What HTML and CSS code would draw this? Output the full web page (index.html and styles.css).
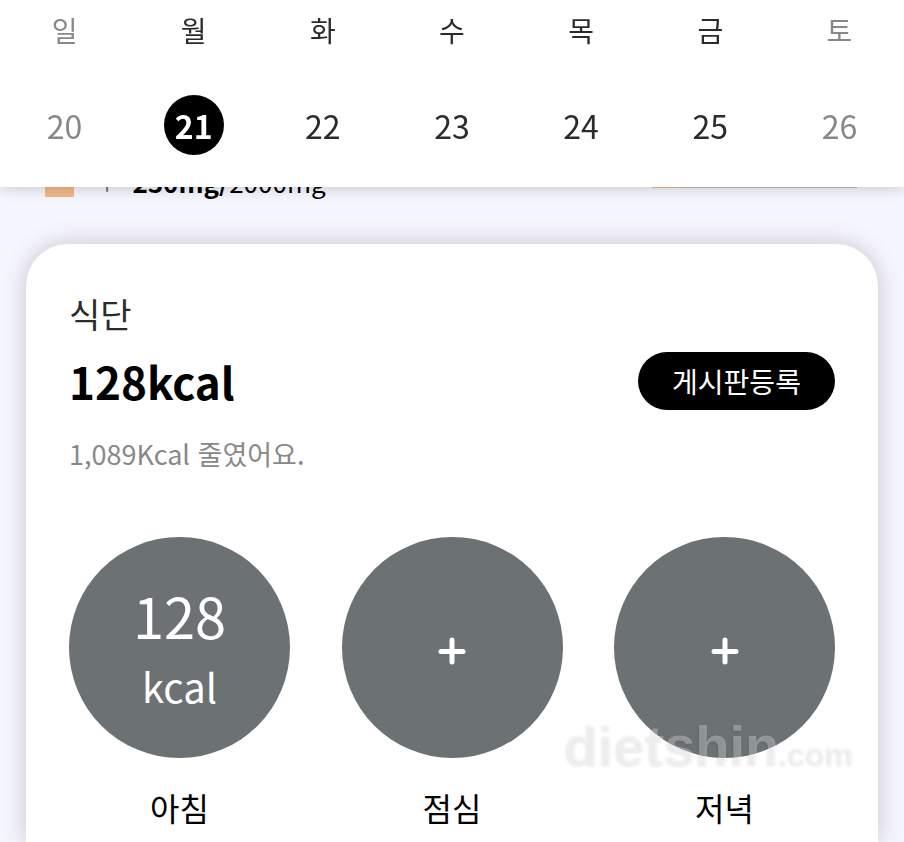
FILE: index.html
```
<!DOCTYPE html>
<html lang="ko">
<head>
  <meta charset="UTF-8">
  <meta name="viewport" content="width=device-width, initial-scale=1.0">
  <title>식단</title>
  <link rel="stylesheet" href="styles.css">
</head>
<body>
  <header class="week">
    <ul class="week_list">
      <li class="day off"><span class="name">일</span><button class="date">20</button></li>
      <li class="day on"><span class="name">월</span><button class="date">21</button></li>
      <li class="day"><span class="name">화</span><button class="date">22</button></li>
      <li class="day"><span class="name">수</span><button class="date">23</button></li>
      <li class="day"><span class="name">목</span><button class="date">24</button></li>
      <li class="day"><span class="name">금</span><button class="date">25</button></li>
      <li class="day off"><span class="name">토</span><button class="date">26</button></li>
    </ul>
  </header>

  <main class="content">
    <div class="nutrient">
      <span class="color"></span>
      <span class="label">나</span>
      <p class="amount"><b>230mg/</b>2000mg</p>
      <div class="bar"><div class="bar_fill"></div></div>
    </div>

    <section class="card">
      <h2 class="title">식단</h2>
      <div class="total">
        <strong class="kcal">128kcal</strong>
        <button class="post_btn">게시판등록</button>
      </div>
      <p class="desc">1,089Kcal 줄였어요.</p>

      <ul class="meals">
        <li class="meal">
          <button class="circle" aria-label="아침 128 kcal"><span class="num">128</span><span class="unit">kcal</span></button>
          <span class="meal_name">아침</span>
        </li>
        <li class="meal">
          <button class="circle" aria-label="점심 추가"><svg class="plus" viewBox="0 0 28 28"><path d="M3 14.5H25M14 3V25"/></svg></button>
          <span class="meal_name">점심</span>
        </li>
        <li class="meal">
          <button class="circle" aria-label="저녁 추가"><svg class="plus" viewBox="0 0 28 28"><path d="M3 14.5H25M14 3V25"/></svg></button>
          <span class="meal_name">저녁</span>
        </li>
      </ul>
      <p class="mark">dietshin<span class="mark_com">.com</span></p>
    </section>
  </main>
</body>
</html>
```
FILE: styles.css
```
*{margin: 0; padding: 0; box-sizing: border-box;}
body{
  background: #f6f6ff;
  color: #000;
  font-family: "Noto Sans CJK KR", sans-serif;
}
ul{list-style: none;}
button{
  border: 0;
  background: none;
  font-family: inherit;
  cursor: pointer;
}

/* 상단 주간 달력 */
.week{
  position: fixed;
  top: 0; left: 0; right: 0;
  z-index: 10;
  padding: 10px 0 32px;
  background: #fff;
  box-shadow: 0 1px 14px rgba(0,0,0,0.2);
}
.week_list{display: flex;}
.day{
  flex: 1;
  display: flex;
  flex-direction: column;
  align-items: center;
  gap: 45px;
  color: #2b2b2b;
}
.name{
  font-size: 28px;
  line-height: 40px;
}
.date{
  width: 60px;
  height: 60px;
  border-radius: 50%;
  color: inherit;
  font-size: 32px;
  line-height: 60px;
}
.off{color: #888;}
.on .date{
  background: #000;
  color: #fff;
  font-weight: bold;
}

.content{padding: 164px 26px 0;}
.nutrient{
  display: flex;
  align-items: center;
  height: 36px;
  padding: 0 21px 0 19px;
  font-size: 26px;
  line-height: 36px;
}
.color{
  width: 29px;
  height: 30px;
  background: #f2b98c;
}
.label{
  margin: 0 21px 0 19px;
  color: #666;
  font-size: 20px;
  line-height: 30px;
}
.bar{
  width: 205px;
  height: 12px;
  margin: 0 0 0 auto;
  background: #bbb;
}
.bar_fill{
  width: 14%;
  height: 100%;
  background: #f2b98c;
}

/* 식단 카드 */
.card{
  position: relative;
  margin-top: 44px;
  padding: 44px 43px 12px;
  border-radius: 42px 42px 0 0;
  background: #fff;
  box-shadow: 0 0 24px rgba(60,50,60,0.25);
}
.title{
  color: #2b2b2b;
  font-size: 34px;
  font-weight: normal;
  line-height: 52px;
}
.total{
  display: flex;
  justify-content: space-between;
  align-items: center;
  margin-top: 8px;
}
.kcal{
  font-size: 44px;
  line-height: 66px;
}
.post_btn{
  width: 197px;
  height: 58px;
  border-radius: 29px;
  background: #000;
  color: #fff;
  font-size: 28px;
}
.desc{
  margin-top: 20px;
  color: #888;
  font-size: 27px;
  line-height: 40px;
}
.meals{
  display: flex;
  justify-content: space-between;
  margin-top: 63px;
}
.meal{
  display: flex;
  flex-direction: column;
  align-items: center;
  gap: 26px;
}
.circle{
  display: flex;
  flex-direction: column;
  align-items: center;
  justify-content: center;
  width: 221px;
  height: 221px;
  border-radius: 50%;
  background: #6c7173;
  color: #fff;
}
.num{
  font-size: 56px;
  line-height: 76px;
}
.unit{
  font-size: 40px;
  line-height: 66px;
}
.plus{
  width: 28px;
  height: 28px;
  margin-top: 6px;
  fill: none;
  stroke: #fff;
  stroke-width: 5;
  stroke-linecap: round;
}
.meal_name{
  font-size: 32px;
  line-height: 46px;
}

/* 워터마크 */
.mark{
  position: absolute;
  right: 24px;
  bottom: 58px;
  color: rgba(255,255,255,0.3);
  font-family: "Liberation Sans", sans-serif;
  font-size: 56px;
  font-weight: bold;
  line-height: 60px;
  text-shadow: -1px 1px 3px rgba(0,0,0,0.1);
  pointer-events: none;
}
.mark_com{font-size: 32px;}
```
